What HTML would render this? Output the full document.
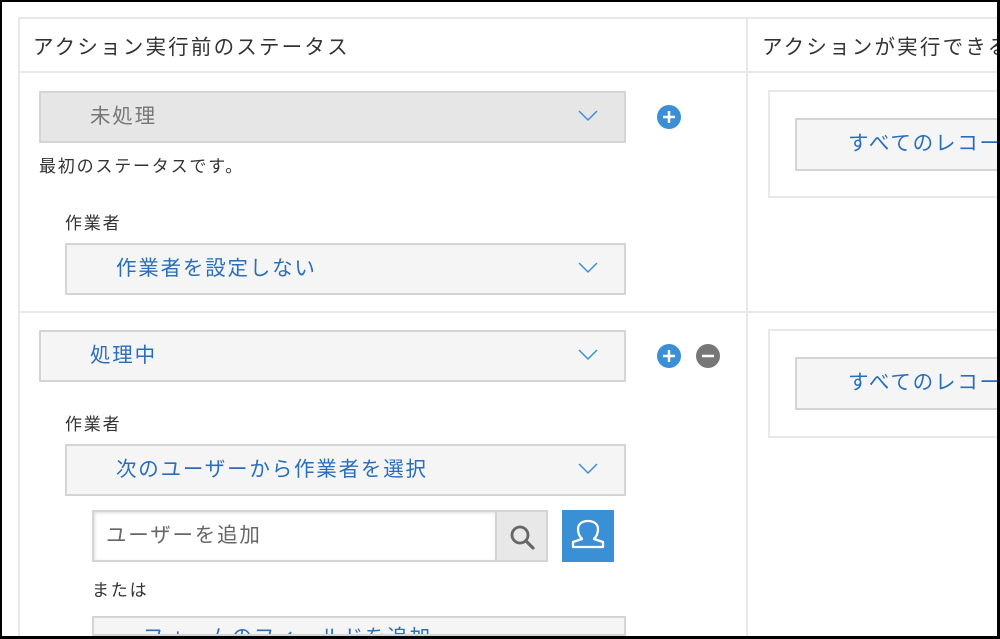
<!DOCTYPE html>
<html><head><meta charset="utf-8"><style>
*{margin:0;padding:0;box-sizing:border-box}
html,body{overflow:hidden}
body{width:1000px;height:639px;background:#000;position:relative;font-family:"Liberation Sans","Noto Sans CJK JP",sans-serif}
.inner{position:absolute;left:2px;top:2px;width:995px;height:634px;background:#fff;overflow:hidden}
.a{position:absolute}
.panel{left:16px;top:15px;width:990px;height:630px;border:2px solid #e8e8e8}
.sel{position:absolute;border:2px solid #d4d4d4;background:#f5f5f5;font-size:20.5px;letter-spacing:1.8px;color:#2a6ebb;line-height:47px;padding-left:49px;white-space:nowrap;overflow:hidden}
.sel svg{position:absolute;right:26px;top:17px}
.t{position:absolute;font-size:17px;letter-spacing:1.8px;color:#333;white-space:nowrap}
.btn{position:absolute;border:2px solid #d4d4d4;background:#f5f5f5;font-size:20.5px;letter-spacing:1.8px;color:#2a6ebb;line-height:48px;padding-left:51px;white-space:nowrap;overflow:hidden}
.box{position:absolute;border:2px solid #e8e8e8;background:#fff}
</style></head><body><div class="inner">
<div class="a panel"></div>
<div class="a" style="left:16px;top:69px;width:979px;height:2px;background:#e8e8e8"></div>
<div class="a" style="left:744px;top:15px;width:2px;height:619px;background:#e8e8e8"></div>
<div class="a" style="left:16px;top:309px;width:979px;height:2px;background:#e8e8e8"></div>
<div class="t" style="left:31px;top:28px;font-size:20.5px;letter-spacing:2.2px">アクション実行前のステータス</div>
<div class="t" style="left:760px;top:28px;font-size:20.5px;letter-spacing:2.2px">アクションが実行できる条件</div>

<div class="sel" style="left:37px;top:89px;width:587px;height:52px;background:#e6e6e6;color:#777">未処理<svg width="20" height="12"><path d="M1 1l9 9 9-9" fill="none" stroke="#3b8fd6" stroke-width="1.5"/></svg></div>
<svg class="a" style="left:654px;top:102px" width="26" height="26"><circle cx="13" cy="13" r="12" fill="#3b8fd6"/><path d="M7 13h12M13 7v12" stroke="#fff" stroke-width="2.5"/></svg>
<div class="t" style="left:37px;top:150px">最初のステータスです。</div>
<div class="t" style="left:63px;top:207px">作業者</div>
<div class="sel" style="left:63px;top:241px;width:561px;height:52px">作業者を設定しない<svg width="20" height="12"><path d="M1 1l9 9 9-9" fill="none" stroke="#3b8fd6" stroke-width="1.5"/></svg></div>

<div class="box" style="left:766px;top:88px;width:260px;height:108px"></div>
<div class="btn" style="left:793px;top:116px;width:220px;height:53px">すべてのレコード</div>

<div class="sel" style="left:37px;top:328px;width:587px;height:52px">処理中<svg width="20" height="12"><path d="M1 1l9 9 9-9" fill="none" stroke="#3b8fd6" stroke-width="1.5"/></svg></div>
<svg class="a" style="left:654px;top:341px" width="26" height="26"><circle cx="13" cy="13" r="12" fill="#3b8fd6"/><path d="M7 13h12M13 7v12" stroke="#fff" stroke-width="2.5"/></svg>
<svg class="a" style="left:693px;top:341px" width="26" height="26"><circle cx="13" cy="13" r="12" fill="#777"/><path d="M7 13h12" stroke="#fff" stroke-width="2.5"/></svg>
<div class="t" style="left:63px;top:408px">作業者</div>
<div class="sel" style="left:63px;top:442px;width:561px;height:52px">次のユーザーから作業者を選択<svg width="20" height="12"><path d="M1 1l9 9 9-9" fill="none" stroke="#3b8fd6" stroke-width="1.5"/></svg></div>

<div class="a" style="left:90px;top:508px;width:405px;height:52px;border:2px solid #d4d4d4;background:#fff;font-size:20.5px;letter-spacing:1.8px;color:#666;line-height:48px;padding-left:12px;box-shadow:inset 1px 1px 3px #ddd">ユーザーを追加</div>
<div class="a" style="left:493px;top:508px;width:53px;height:52px;border:2px solid #d4d4d4;background:#e8e8e8"><svg style="position:absolute;left:12px;top:12px" width="28" height="28"><circle cx="11" cy="11" r="8" fill="none" stroke="#666" stroke-width="2.8"/><path d="M17 17l7 7" stroke="#666" stroke-width="3.2" stroke-linecap="round"/></svg></div>
<div class="a" style="left:560px;top:508px;width:52px;height:52px;background:#3a8fd5"><svg style="position:absolute;left:8px;top:8px" width="36" height="36"><path d="M12 21c-3-3-4-6-4-10 0-5 4-8 10-8s10 3 10 8c0 4-1 7-4 10l9 3v5H3v-5z" fill="none" stroke="#fff" stroke-width="2.3" stroke-linejoin="round"/></svg></div>
<div class="t" style="left:90px;top:574px">または</div>
<div class="sel" style="left:90px;top:614px;width:534px;height:20px;line-height:40px">フォームのフィールドを追加</div>

<div class="box" style="left:766px;top:327px;width:260px;height:109px"></div>
<div class="btn" style="left:793px;top:355px;width:220px;height:53px">すべてのレコード</div>
</div></body></html>
